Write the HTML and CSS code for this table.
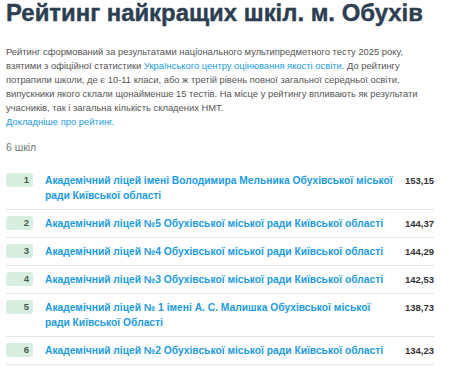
FILE: index.html
```html
<!DOCTYPE html>
<html lang="uk">
<head>
<meta charset="utf-8">
<link rel="stylesheet" href="styles.css">
</head>
<body>
<main class="page">
  <h1 class="title">Рейтинг найкращих шкіл. м. Обухів</h1>
  <p class="intro">Рейтинг сформований за результатами національного мультипредметного тесту 2025 року, взятими з офіційної статистики <a href="#">Українського центру оцінювання якості освіти</a>. До рейтингу потрапили школи, де є 10-11 класи, або ж третій рівень повної загальної середньої освіти, випускники якого склали щонайменше 15 тестів. На місце у рейтингу впливають як результати учасників, так і загальна кількість складених НМТ.<br><a href="#">Докладніше про рейтинг.</a></p>
  <div class="count">6 шкіл</div>
  <ol class="list">
    <li class="row"><span class="rank">1</span><a class="name" href="#">Академічний ліцей імені Володимира Мельника Обухівської міської ради Київської області</a><span class="score">153,15</span></li>
    <li class="row"><span class="rank">2</span><a class="name" href="#">Академічний ліцей №5 Обухівської міської ради Київської області</a><span class="score">144,37</span></li>
    <li class="row"><span class="rank">3</span><a class="name" href="#">Академічний ліцей №4 Обухівської міської ради Київської області</a><span class="score">144,29</span></li>
    <li class="row"><span class="rank">4</span><a class="name" href="#">Академічний ліцей №3 Обухівської міської ради Київської області</a><span class="score">142,53</span></li>
    <li class="row"><span class="rank">5</span><a class="name" href="#">Академічний ліцей № 1 імені А. С. Малишка Обухівської міської ради Київської Області</a><span class="score">138,73</span></li>
    <li class="row"><span class="rank">6</span><a class="name" href="#">Академічний ліцей №2 Обухівської міської ради Київської області</a><span class="score">134,23</span></li>
  </ol>
</main>
</body>
</html>
```
FILE: styles.css
```css
html, body {
  margin: 0;
  padding: 0;
  background: #fff;
}
body {
  font-family: "Liberation Sans", Arial, sans-serif;
}
.page {
  width: 428px;
  padding: 0 6px;
}
.title {
  margin: 1px 0 0;
  font-size: 23.9px;
  line-height: 24px;
  font-weight: 700;
  color: #2c3e50;
  -webkit-text-stroke: 0.4px #2c3e50;
}
.intro {
  margin: 20px 0 0;
  font-size: 9.4px;
  line-height: 14px;
  color: #555;
}
.intro a {
  color: #1b9be3;
  text-decoration: none;
}
.count {
  margin-top: 11px;
  font-size: 10.5px;
  line-height: 14px;
  color: #777;
}
.list {
  list-style: none;
  margin: 13px 0 0;
  padding: 0;
}
.row {
  display: grid;
  grid-template-columns: 27px 362px 1fr;
  align-items: start;
  padding: 6px 0;
  border-bottom: 1px solid #e6e6e6;
}
.rank {
  background: #d8eee1;
  color: #3f5e4c;
  font-size: 9.5px;
  font-weight: 700;
  line-height: 14px;
  text-align: right;
  padding-right: 4px;
  border-radius: 3px;
}
.name {
  padding-left: 12px;
  color: #1b9be3;
  font-size: 10.25px;
  font-weight: 700;
  line-height: 15px;
  text-decoration: none;
}
.score {
  color: #333;
  font-size: 9.5px;
  font-weight: 700;
  line-height: 15px;
  text-align: right;
}
```
